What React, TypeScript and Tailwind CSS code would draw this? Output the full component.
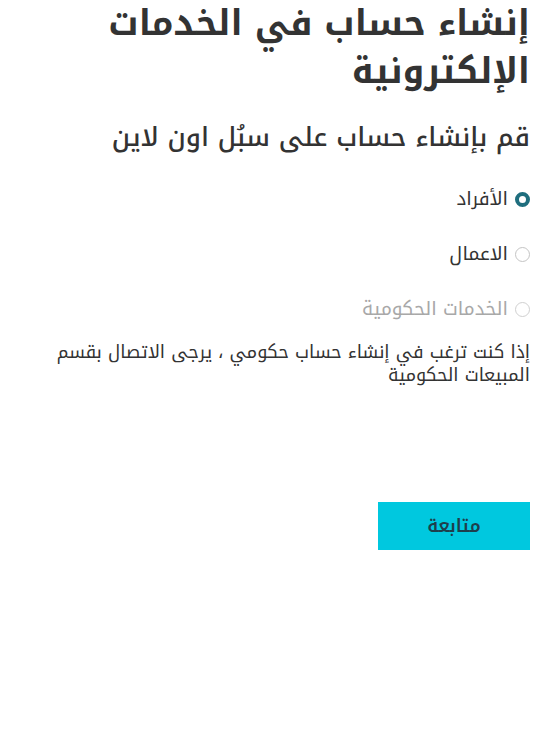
import { useState } from "react";

const OPTIONS = [
  { id: "individuals", label: "الأفراد", disabled: false },
  { id: "business", label: "الاعمال", disabled: false },
  { id: "gov", label: "الخدمات الحكومية", disabled: true },
];

const Radio = ({ checked, disabled }: { checked: boolean; disabled: boolean }) =>
  checked ? (
    <span className="w-[15px] h-[15px] rounded-full border-[4px] border-[#1f6e7e] bg-white shrink-0" />
  ) : (
    <span
      className={`w-[15px] h-[15px] rounded-full border shrink-0 ${
        disabled ? "border-[#d0d0d0]" : "border-[#c4c4c4]"
      } bg-white`}
    />
  );

export default function App() {
  const [selected, setSelected] = useState("individuals");

  return (
    <div
      dir="rtl"
      className="min-h-[755px] bg-white pr-[5px] pl-[50px] text-[#333]"
      style={{ fontFamily: '"Noto Kufi Arabic", "Noto Sans", sans-serif' }}
    >
      {/* Heading */}
      <h1 className="text-[35px] leading-[48px] font-bold text-[#333]">
        إنشاء حساب في الخدمات الإلكترونية
      </h1>
      <h2 className="mt-[26px] text-[26px] leading-[32px] font-medium text-[#333]">
        قم بإنشاء حساب على سبُل اون لاين
      </h2>

      {/* Account type */}
      <div className="mt-[33px] flex flex-col gap-[31px]">
        {OPTIONS.map((o) => (
          <label
            key={o.id}
            onClick={() => !o.disabled && setSelected(o.id)}
            className={`flex items-center gap-[7px] text-[19px] leading-[24px] ${
              o.disabled ? "text-[#a8a8a8]" : "text-[#333] cursor-pointer"
            }`}
          >
            <Radio checked={selected === o.id} disabled={o.disabled} />
            <span>{o.label}</span>
          </label>
        ))}
      </div>

      <p className="mt-[20px] text-[18px] leading-[23px] text-[#333]">
        إذا كنت ترغب في إنشاء حساب حكومي ، يرجى الاتصال بقسم المبيعات الحكومية
      </p>

      <div className="mt-[115px] flex">
        <button className="w-[152px] h-[48px] bg-[#00c8df] text-[#1e3f4c] text-[18px] font-semibold">
          متابعة
        </button>
      </div>
    </div>
  );
}
